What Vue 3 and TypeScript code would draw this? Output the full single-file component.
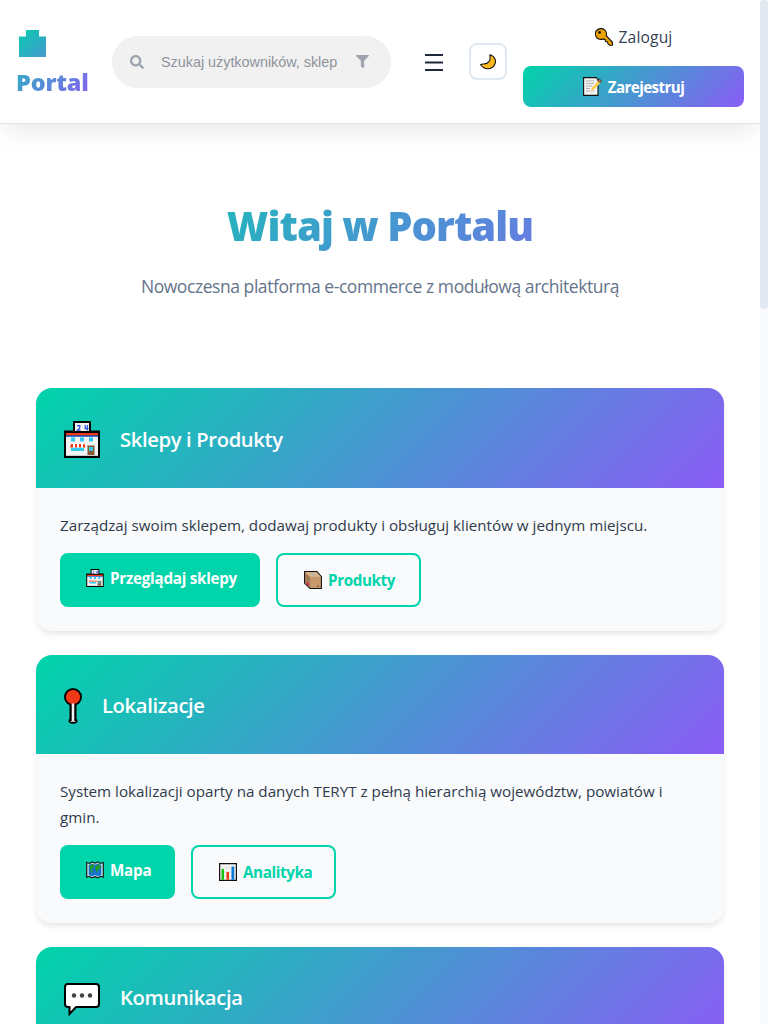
<script setup lang="ts">
interface Action {
  label: string
  icon: string
  primary: boolean
}
interface Section {
  title: string
  icon: string
  key: string
  text: string
  actions: Action[]
}

const sections: Section[] = [
  {
    title: 'Sklepy i Produkty',
    icon: 'shop',
    key: 'shops',
    text: 'Zarządzaj swoim sklepem, dodawaj produkty i obsługuj klientów w jednym miejscu.',
    actions: [
      { label: 'Przeglądaj sklepy', icon: 'shop', primary: true },
      { label: 'Produkty', icon: 'box', primary: false },
    ],
  },
  {
    title: 'Lokalizacje',
    icon: 'pin',
    key: 'places',
    text: 'System lokalizacji oparty na danych TERYT z pełną hierarchią województw, powiatów i gmin.',
    actions: [
      { label: 'Mapa', icon: 'map', primary: true },
      { label: 'Analityka', icon: 'chart', primary: false },
    ],
  },
  {
    title: 'Komunikacja',
    icon: 'bubble',
    key: 'chat',
    text: '',
    actions: [],
  },
]
</script>

<template>
  <svg class="defs" aria-hidden="true">
    <symbol id="shop" viewBox="0 0 36 37">
      <path d="M9 0h18v9.500h9V37H0V9.500h9z" fill="#000" />
      <path d="M11 2h14v8H11z" fill="#f2f2f2" />
      <path d="M13 4.600h2.800v2.200L13.400 9.200H16.500M21.200 4v3.600h3.300M23.300 4v5.600" fill="none" stroke="#2448f0" stroke-width="1.200" />
      <path d="M2 15h32v20H2z" fill="#f2f2f2" />
      <path d="M2 12h32v2.500H2z" fill="#f03a17" />
      <path d="M2 14.500h32v1.500H2z" fill="#3b6fe0" />
      <path d="M7 16.500h4v4H7zM16 16.500h4v4h-4zM25 16.500h4v4h-4z" fill="#32c8f0" />
      <path d="M7 26.500h13v3.500H7z" fill="#32c8f0" />
      <path d="M6.500 23h14l1 3.500H5.500z" fill="#fff" />
      <path d="M7 23h2v3.500H6zM11 23h2v3.500h-2zM15 23h2v3.500h-2zM19 23h1.500l1 3.500H19z" fill="#f03a17" />
      <path d="M23 24h8v11h-8z" fill="#b0a8a0" />
      <path d="M24 25h6v10h-6z" fill="#8e562e" />
      <path d="M25 26h4v4h-4z" fill="#32c8f0" />
      <path d="M2 34h32v1H2z" fill="#ccc" />
    </symbol>
    <symbol id="pin" viewBox="0 0 18 36">
      <path d="M9 15v17" stroke="#000" stroke-width="7" />
      <ellipse cx="9" cy="33" rx="4.500" ry="2.800" fill="#000" />
      <circle cx="9" cy="9" r="9" fill="#000" />
      <circle cx="9" cy="9" r="7.100" fill="#f03a17" />
      <path d="M9 15.500V33" stroke="#f2f2f2" stroke-width="2.600" />
      <path d="M6.500 33.500h5" stroke="#bbb" stroke-width="1" />
    </symbol>
    <symbol id="bubble" viewBox="0 0 36 33">
      <path d="M4 1h28q3 0 3 3v17q0 3-3 3H12l-6.500 7v-7H4q-3 0-3-3V4q0-3 3-3z" fill="#fff" stroke="#000" stroke-width="2" />
      <g fill="#404040">
        <circle cx="10" cy="12.500" r="2.200" />
        <circle cx="18" cy="12.500" r="2.200" />
        <circle cx="26" cy="12.500" r="2.200" />
      </g>
    </symbol>
    <symbol id="box" viewBox="0 0 19 19">
      <path d="M.6.6h13L18.400 6v12.400H6.500L.6 13z" fill="#c69a6d" stroke="#111" stroke-width="1.100" />
      <path d="M1.200 1.200h12L17.800 6H6.500z" fill="#dcb58c" />
      <path d="M1.200 1.800 6.300 6v11.500L1.200 12.700z" fill="#a47a55" />
      <path d="M6.500 1.200h2.400L13.500 6h-2.700z" fill="#b9b0ab" />
      <path d="m3 12 2 1.500v2l-2-1.500z" fill="#f05" />
      <path d="M13.500 16h2.500" stroke="#6b4a2c" />
    </symbol>
    <symbol id="map" viewBox="0 0 18 18">
      <path d="m.7 1.500 2.800 1L6 .8l3 1.300L12 .8l2.500 1.700 2.800-1v14.800l-2.800-1L12 17l-3-1.300L6 17l-2.500-1.700-2.800 1z" fill="#b9d8df" stroke="#111" stroke-width="1.100" />
      <path d="m2.800 4 3-1.500L9 3.800l3.200-1.300 3 1.500v10L12 15.200l-3-1.300-3 1.300-3.200-1.400z" fill="#1673d1" />
      <path d="m3.500 4.500 3-1.500 2 1.500L7 7 5.500 8 7 10l-1 3-1.500-3zM9.500 5l3-1.500 2.500 1L14 8l-2 1-.5 3L10 9.500 9 7z" fill="#20982e" />
    </symbol>
    <symbol id="chart" viewBox="0 0 18 18">
      <path d="M.6.6h16.800v16.800H.6z" fill="#f2f2f2" stroke="#111" stroke-width="1.200" />
      <path d="M1.200 5h15.600M1.200 9h15.600M1.200 13h15.600" stroke="#ccc" stroke-width=".6" />
      <path d="M2.500 6H5v10.800H2.500z" fill="#16c60c" />
      <path d="M7.500 9H10v7.800H7.500z" fill="#f03a17" />
      <path d="M12.500 3.500h2.700v13.300h-2.700z" fill="#0078d7" />
    </symbol>
  </svg>

  <div class="screen">
    <div class="page">
      <header class="topbar">
        <a class="logo">
          <svg class="logo-mark" viewBox="0 0 27 27">
            <defs>
              <linearGradient id="mark" gradientUnits="userSpaceOnUse" x1="-7" y1="0" x2="54" y2="61">
                <stop offset="0" stop-color="#00d4aa" />
                <stop offset="1" stop-color="#8b5cf6" />
              </linearGradient>
            </defs>
            <path d="M7 0h13v6.500h7V27H0V6.500h7z" fill="url(#mark)" />
          </svg>
          <span class="logo-text">Portal</span>
        </a>
        <div class="search">
          <svg class="ic-search" viewBox="0 0 512 512"><path fill="#9ca3af" d="M505 442.700 405.300 343c-4.500-4.500-10.600-7-17-7H372c27.600-35.300 44-79.700 44-128C416 93.100 322.900 0 208 0S0 93.100 0 208s93.100 208 208 208c48.300 0 92.700-16.400 128-44v16.300c0 6.400 2.500 12.500 7 17l99.700 99.700c9.400 9.400 24.600 9.400 33.900 0l28.300-28.300c9.400-9.400 9.400-24.600.1-34zM208 336c-70.700 0-128-57.200-128-128 0-70.700 57.200-128 128-128 70.700 0 128 57.200 128 128 0 70.700-57.200 128-128 128z" /></svg>
          <span class="placeholder">Szukaj użytkowników, sklep</span>
          <svg class="ic-filter" viewBox="0 0 512 512"><path fill="#9ca3af" d="M488 0H24C2.700 0-8 25.900 7.100 41L192 225.900V432c0 7.800 3.800 15.200 10.200 19.700l80 56C298 518.700 320 507.500 320 488V225.900L505 41C520 25.900 509.300 0 488 0z" /></svg>
        </div>
        <svg class="menu" viewBox="0 0 18 18"><path d="M0 1h18M0 8.500h18M0 16h18" stroke="#1e293b" stroke-width="2" /></svg>
        <button class="theme">
          <svg class="moon" viewBox="0 0 16 16"><path d="M10.200.7c4.800 1.600 6.600 6.400 4.100 10.500-2.600 4.200-9.500 5.300-13.700-.5.900-.8 1.700-.7 3-.7C8 10.100 10.900 7 10 2.600 9.800 1.700 9.500 1.200 10.200.7z" fill="#fdb81e" stroke="#111" stroke-width="1.100" /></svg>
        </button>
        <div class="auth">
          <a class="login">
            <svg class="key" viewBox="0 0 18 18"><path d="M6 .6a5.300 5.300 0 0 1 5.200 7l6.200 6.700v3h-3l-1.500-1.700-.5-1.800-1.800-.3-.4-1.800-2.200-.8A5.400 5.400 0 1 1 6 .6z" fill="#eaa300" stroke="#111" stroke-width="1.100" /><circle cx="4.600" cy="4.400" r="1.400" fill="#111" /></svg>
            <span>Zaloguj</span>
          </a>
          <a class="register">
            <svg class="memo" viewBox="0 0 19 19"><path d="M.6.600h12.800l1.600 2v15.800H.6z" fill="#f2f2f2" stroke="#111" stroke-width="1.100" /><path d="M3 4h8M3 6.500h8M3 9h6M3 11.500h4M3 14h8" stroke="#aaa" stroke-width=".9" /><path d="m7.500 14 1-3 7-7.500 2 2-7 7.500z" fill="#fdc83c" stroke="#fff" stroke-width=".4" /><path d="m15 3.500 1.500-1.300 2 1.800-1.300 1.600z" fill="#e8836d" stroke="#111" stroke-width=".8" /></svg>
            <span>Zarejestruj</span>
          </a>
        </div>
      </header>

      <main>
        <section class="hero">
          <h1>Witaj w Portalu</h1>
          <p>Nowoczesna platforma e-commerce z modułową architekturą</p>
        </section>
        <div class="cards">
          <article v-for="s in sections" :key="s.key" class="card" :class="s.key">
            <div class="card-head">
              <svg class="card-icon"><use :href="'#' + s.icon" /></svg>
              <h2>{{ s.title }}</h2>
            </div>
            <div class="card-body">
              <p>{{ s.text }}</p>
              <div class="actions">
                <a v-for="a in s.actions" :key="a.label" class="btn" :class="[a.primary ? 'primary' : 'outline', 'b-' + a.icon]">
                  <svg class="btn-icon"><use :href="'#' + a.icon" /></svg>
                  <span>{{ a.label }}</span>
                </a>
              </div>
            </div>
          </article>
        </div>
      </main>
    </div>
    <div class="scrollbar"><div class="thumb"></div></div>
  </div>
</template>

<style>
body {
  margin: 0;
  background: #fff;
}
html {
  overflow: hidden;
}
</style>

<style scoped>
* {
  box-sizing: border-box;
}
.defs {
  position: absolute;
  width: 0;
  height: 0;
}
svg {
  display: block;
  flex: none;
}
span,
h1,
h2,
p {
  white-space: nowrap;
}
.screen {
  display: flex;
  width: 768px;
  height: 1024px;
  overflow: hidden;
  font-family: 'Open Sans', 'Noto Sans', sans-serif;
  color: #1e293b;
}
.page {
  width: 760px;
  height: 1024px;
  overflow: hidden;
}
.scrollbar {
  width: 8px;
  background: #f8fafc;
}
.thumb {
  height: 309px;
  border-radius: 4px;
  background: #e2e8f0;
}
.topbar {
  display: flex;
  align-items: center;
  height: 124px;
  padding: 0 16px;
  border-bottom: 1px solid #e2e4e7;
  background: #fff;
  box-shadow: 0 10px 25px -5px rgba(0, 0, 0, 0.1);
}
.logo {
  width: 72px;
  margin-right: 24px;
  padding-top: 9px;
}
.logo-mark {
  width: 27px;
  height: 27px;
  margin-left: 3px;
}
.logo-text {
  display: block;
  margin-top: 7px;
  height: 38px;
  line-height: 37px;
  font-size: 23.500px;
  letter-spacing: -0.200px;
  font-weight: 800;
  color: transparent;
  background: linear-gradient(135deg, #2cb2bf, #8b5cf6);
  background-clip: text;
  -webkit-background-clip: text;
}
.search {
  display: flex;
  align-items: center;
  width: 279px;
  height: 52px;
  padding-left: 18px;
  border-radius: 26px;
  background: #f1f1f1;
}
.ic-search {
  width: 14px;
  height: 14px;
}
.placeholder {
  width: 176px;
  margin: 0 19px 0 17px;
  font: 14.400px/20px 'Liberation Sans', Arial, sans-serif;
  letter-spacing: -0.020px;
  color: #8e939b;
}
.ic-filter {
  width: 13px;
  height: 13px;
}
.menu {
  width: 18px;
  height: 18px;
  margin: 3px 0 0 34px;
}
.theme {
  display: flex;
  align-items: center;
  justify-content: center;
  width: 38px;
  height: 37px;
  margin-left: 26px;
  padding: 0;
  border: 2px solid #e2e8f0;
  border-radius: 8px;
  background: #fff;
}
.moon {
  width: 16px;
  height: 16px;
}
.auth {
  width: 221px;
  margin-left: 16px;
}
.login,
.register {
  display: flex;
  align-items: center;
  justify-content: center;
  gap: 6px;
  height: 41px;
}
.login {
  margin-bottom: 8px;
  font-size: 15.600px;
  letter-spacing: 0.150px;
  font-weight: 500;
  color: #334155;
}
.key {
  width: 18px;
  height: 18px;
}
.register {
  padding-top: 1px;
  font-size: 15.200px;
  letter-spacing: -0.600px;
  border-radius: 8px;
  background: linear-gradient(135deg, #00d4aa, #8b5cf6);
  color: #fff;
  font-weight: 700;
}
.memo {
  width: 19px;
  height: 19px;
}
.hero {
  height: 264.400px;
  padding: 72px 36px 0;
  text-align: center;
}
h1 {
  margin: 0;
  height: 64px;
  line-height: 60px;
  font-size: 40px;
  letter-spacing: -0.950px;
  font-weight: 800;
  color: transparent;
  background: linear-gradient(135deg, #00d4aa, #8b5cf6);
  background-clip: text;
  -webkit-background-clip: text;
}
.hero p {
  margin: 11px 0 0;
  line-height: 30px;
  font-size: 17.500px;
  letter-spacing: -0.440px;
  color: #64748b;
}
.cards {
  display: flex;
  flex-direction: column;
  gap: 24px;
  padding: 0 36px;
}
.card {
  border-radius: 16px;
  overflow: hidden;
  background: #f8fafc;
  box-shadow: 0 4px 6px -1px rgba(0, 0, 0, 0.1);
}
.card-head {
  display: flex;
  align-items: center;
  gap: 20px;
  height: 99.200px;
  padding: 4px 28px 0;
  background: linear-gradient(135deg, #00d4aa, #8b5cf6);
}
h2 {
  margin: 0;
  line-height: 32px;
  padding-bottom: 2px;
  font-size: 20.200px;
  letter-spacing: -0.350px;
  font-weight: 650;
  color: #fff;
}
.card-icon {
  width: 36px;
  height: 37px;
}
.places .card-icon {
  width: 18px;
  height: 36px;
}
.chat .card-icon {
  width: 36px;
  height: 33px;
  margin-top: 2px;
}
.card-body {
  padding: 24px;
}
.card-body p {
  margin: 0 0 15px;
  padding-top: 1px;
  line-height: 25.600px;
  font-size: 15.200px;
  color: #303b4c;
  white-space: normal;
}
.actions {
  display: flex;
  gap: 16px;
}
.btn {
  display: flex;
  align-items: flex-start;
  height: 53.600px;
  padding-top: 13px;
  border-radius: 8px;
  line-height: 25.600px;
  font-size: 15.200px;
  letter-spacing: -0.380px;
  font-weight: 700;
}
.btn-icon {
  width: 18px;
  height: 18px;
  margin: 3px 6px 0 0;
}
.primary {
  padding-left: 26px;
  background: #00d4aa;
  color: #fff;
}
.outline {
  padding-left: 26px;
  border: 2px solid #00d4aa;
  color: #00d4aa;
}
.b-shop {
  width: 200px;
  letter-spacing: -0.260px;
}
.b-box {
  width: 145px;
}
.b-map {
  width: 115px;
  letter-spacing: -0.200px;
}
.b-chart {
  width: 145px;
}
</style>
